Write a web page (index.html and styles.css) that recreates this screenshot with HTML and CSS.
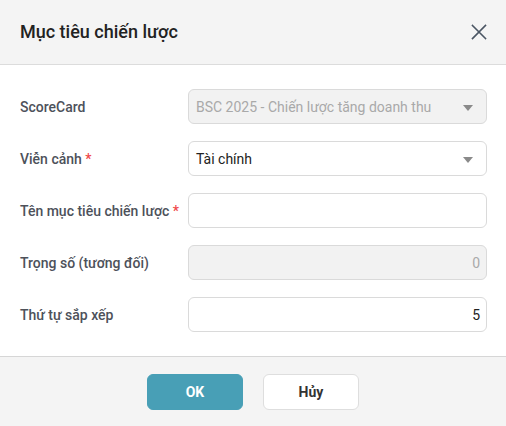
FILE: index.html
```html
<!DOCTYPE html>
<html lang="vi">
<head>
<meta charset="utf-8">
<link rel="stylesheet" href="styles.css">
</head>
<body>
<div class="dialog">
  <div class="header">
    <h1 class="title">Mục tiêu chiến lược</h1>
    <button class="close" aria-label="Đóng">
      <svg width="16" height="16" viewBox="0 0 16 16"><path d="M1.5 1.5 L14.5 14.5 M14.5 1.5 L1.5 14.5" stroke="#4a5563" stroke-width="1.6" fill="none" stroke-linecap="square"/></svg>
    </button>
  </div>
  <div class="body">
    <div class="row">
      <label class="label">ScoreCard</label>
      <div class="field disabled select">
        <span class="value muted">BSC 2025 - Chiến lược tăng doanh thu</span>
        <span class="caret"></span>
      </div>
    </div>
    <div class="row">
      <label class="label">Viễn cảnh <span class="req">*</span></label>
      <div class="field select">
        <span class="value">Tài chính</span>
        <span class="caret"></span>
      </div>
    </div>
    <div class="row">
      <label class="label">Tên mục tiêu chiến lược <span class="req">*</span></label>
      <div class="field"></div>
    </div>
    <div class="row">
      <label class="label">Trọng số (tương đối)</label>
      <div class="field disabled num"><span class="value muted">0</span></div>
    </div>
    <div class="row">
      <label class="label">Thứ tự sắp xếp</label>
      <div class="field num"><span class="value">5</span></div>
    </div>
  </div>
  <div class="footer">
    <button class="btn primary">OK</button>
    <button class="btn secondary">Hủy</button>
  </div>
</div>
</body>
</html>
```
FILE: styles.css
```css
* { box-sizing: border-box; }
html, body { margin: 0; padding: 0; background: #fff; }
body { font-family: Roboto, "Liberation Sans", sans-serif; width: 506px; height: 426px; overflow: hidden; }
.dialog { display: flex; flex-direction: column; height: 426px; }
.header {
  height: 65px;
  background: #f4f4f4;
  border-bottom: 1px solid #dcdcdc;
  display: flex;
  align-items: center;
  justify-content: space-between;
  padding: 0 19px 0 20px;
}
.title { margin: 0; font-size: 18px; font-weight: 500; color: #222; padding-bottom: 2px; }
.close { border: 0; background: none; padding: 0; width: 16px; height: 16px; display: flex; margin-top: 0; }
.body { padding: 24px 19px 24px 20px; display: flex; flex-direction: column; gap: 17px; }
.row { display: grid; grid-template-columns: 168px 1fr; align-items: center; }
.label { font-size: 14px; font-weight: 500; color: #4d515a; }
.req { color: #f0484a; }
.field {
  height: 35px;
  border: 1px solid #dadada;
  border-radius: 6px;
  background: #fff;
  display: flex;
  align-items: center;
  padding: 0 7px;
  font-size: 14px;
  color: #222;
}
.field.disabled { background: #f2f2f2; }
.field.num { justify-content: flex-end; padding-right: 6px; }
.select { justify-content: space-between; padding-right: 13px; }
.muted { color: #a9a9a9; }
.caret {
  width: 0; height: 0;
  border-left: 5px solid transparent;
  border-right: 5px solid transparent;
  border-top: 6px solid #8a8a8a;
  margin-top: 2px;
}
.footer {
  flex: 1;
  background: #f4f4f4;
  border-top: 1px solid #d6d6d6;
  display: flex;
  justify-content: center;
  gap: 20px;
  padding-top: 17px;
}
.btn {
  width: 96px;
  height: 36px;
  border-radius: 6px;
  font-family: Roboto, "Liberation Sans", sans-serif;
  font-size: 14px;
  font-weight: 700;
}
.primary { background: #489fb6; color: #fff; border: 1px solid #489fb6; }
.secondary { background: #fff; color: #333; border: 1px solid #dedede; }
```
